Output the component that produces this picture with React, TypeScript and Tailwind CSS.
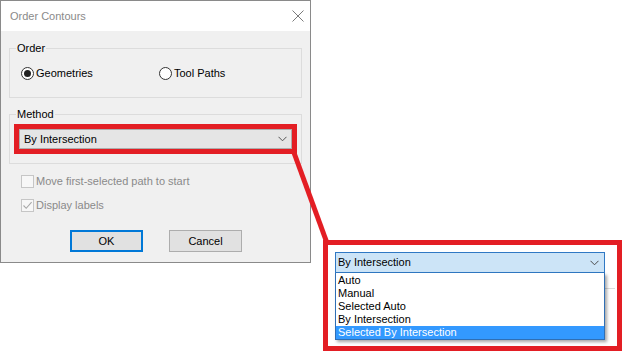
import React from "react";

const Radio: React.FC<{ checked?: boolean; label: string; className?: string }> = ({
  checked,
  label,
  className = "",
}) => (
  <div className={`flex items-center gap-[2px] ${className}`}>
    <span className="w-[13px] h-[13px] rounded-full border border-[#333333] bg-white flex items-center justify-center">
      {checked && <span className="w-[7px] h-[7px] rounded-full bg-[#222222]" />}
    </span>
    <span className="text-black leading-[13px]">{label}</span>
  </div>
);

const Check: React.FC<{ checked?: boolean; label: string; className?: string }> = ({
  checked,
  label,
  className = "",
}) => (
  <div className={`flex items-center gap-[2px] h-[13px] ${className}`}>
    <span className="w-[13px] h-[13px] border border-[#c6c6c6] bg-[#f7f7f7] flex items-center justify-center">
      {checked && (
        <svg width="11" height="11" viewBox="0 0 11 11">
          <path d="M1.5 5.5 L4.2 8.3 L9.6 2.2" fill="none" stroke="#a8a8a8" strokeWidth="1.1" />
        </svg>
      )}
    </span>
    <span className="text-[#8a8a8a] leading-[13px]">{label}</span>
  </div>
);

const Chevron: React.FC<{ color: string }> = ({ color }) => (
  <svg width="9" height="6" viewBox="0 0 9 6">
    <path d="M0.5 0.8 L4.5 4.8 L8.5 0.8" fill="none" stroke={color} strokeWidth="1" />
  </svg>
);

export default function App() {
  const options = ["Auto", "Manual", "Selected Auto", "By Intersection", "Selected By Intersection"];

  return (
    <div className="relative w-[630px] h-[360px] bg-white overflow-hidden font-['Liberation_Sans',Arial,sans-serif] text-[11px]">
      {/* Dialog */}
      <div className="w-[311px] h-[263px] border border-[#8a8a8a] bg-[#f0f0f0] flex flex-col">
        <div className="h-[30px] bg-white flex items-center justify-between pl-[9px] pr-[6px]">
          <span className="text-[#8a8a8a] leading-[13px]">Order Contours</span>
          <svg width="12" height="12" viewBox="0 0 12 12">
            <path d="M0.5 0.5 L11.5 11.5 M11.5 0.5 L0.5 11.5" stroke="#7a7a7a" strokeWidth="1" />
          </svg>
        </div>

        <div className="pl-[8px] flex flex-col">
          {/* Order group */}
          <fieldset className="w-[293px] h-[56px] mt-[11px] border border-[#dcdcdc]">
            <legend className="ml-[6px] px-px leading-[13px] text-black">Order</legend>
            <div className="flex items-center pl-[11px] pt-[12px]">
              <Radio checked label="Geometries" className="w-[138px]" />
              <Radio label="Tool Paths" />
            </div>
          </fieldset>

          {/* Method group */}
          <fieldset className="w-[293px] h-[56px] mt-[10px] border border-[#dcdcdc]">
            <legend className="ml-[6px] px-px leading-[13px] text-black">Method</legend>
            <div className="pl-[4px] pt-[3px]">
              <div className="w-[283px] border-[5px] border-[#e31e24]">
                <div className="h-[20px] bg-[#e5e5e5] border border-[#adadad] flex items-center justify-between pl-[4px] pr-[4px]">
                  <span className="text-black">By Intersection</span>
                  <Chevron color="#555555" />
                </div>
              </div>
            </div>
          </fieldset>

          <Check label="Move first-selected path to start" className="mt-[11px] ml-[12px]" />
          <Check checked label="Display labels" className="mt-[11px] ml-[12px]" />

          <div className="flex mt-[18px] ml-[61px] gap-[26px]">
            <button className="w-[73px] h-[22px] bg-[#e1e1e1] border-2 border-[#0078d7] text-black">
              OK
            </button>
            <button className="w-[73px] h-[22px] bg-[#e1e1e1] border border-[#adadad] text-black">
              Cancel
            </button>
          </div>
        </div>
      </div>

      {/* Connector line */}
      <svg className="absolute left-0 top-0 pointer-events-none" width="630" height="360">
        <line x1="293" y1="150" x2="327" y2="243" stroke="#e31e24" strokeWidth="5" />
      </svg>

      {/* Callout */}
      <div className="absolute left-[323px] top-[240px] w-[299px] h-[111px] border-[5px] border-[#e31e24] bg-white pl-[7px] pt-[7px]">
        <div className="absolute left-[276px] top-[43px] w-[11px] h-px bg-[#dcdcdc]" />
        <div className="relative w-[270px]">
          <div className="h-[21px] bg-[#cce4f7] border border-[#2f78c4] flex items-center justify-between pl-[2px] pr-[5px]">
            <span className="text-black">By Intersection</span>
            <Chevron color="#4a4a4a" />
          </div>
          <div className="border border-t-0 border-[#2f6fb5] bg-white pt-px shadow-[2px_2px_3px_rgba(0,0,0,0.35)]">
            {options.map((o, i) => (
              <div
                key={o}
                className={`h-[13px] leading-[13px] pl-[2px] ${
                  i === options.length - 1 ? "bg-[#3399ff] text-white" : "text-black"
                }`}
              >
                {o}
              </div>
            ))}
          </div>
        </div>
      </div>
    </div>
  );
}
